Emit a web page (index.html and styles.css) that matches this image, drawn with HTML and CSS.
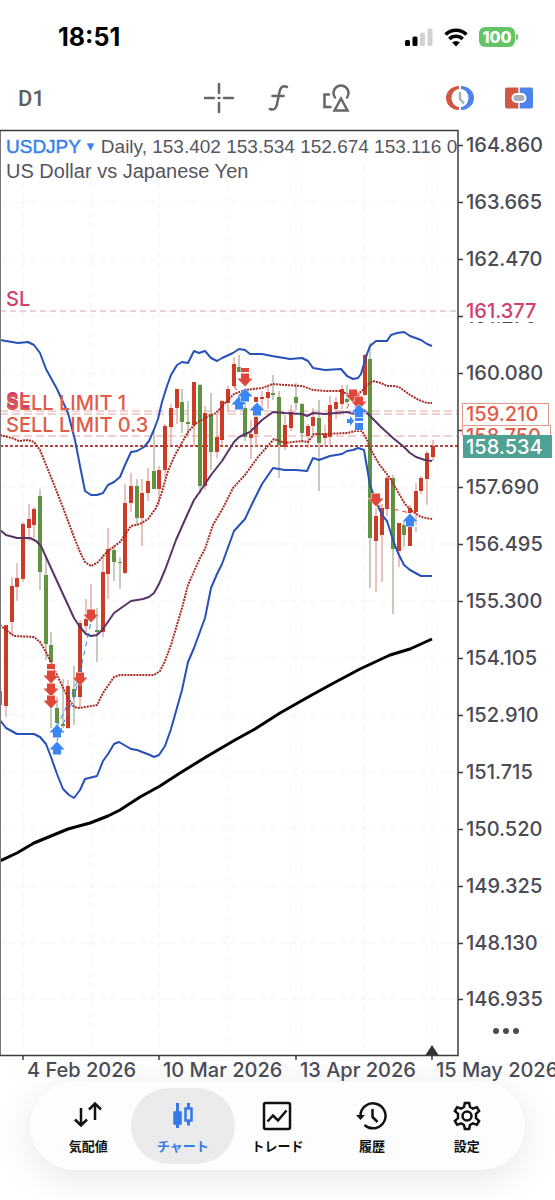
FILE: index.html
```html
<!DOCTYPE html>
<html lang="ja">

<head>
  <meta charset="UTF-8">
  <meta name="viewport" content="width=device-width">
  <title>USDJPY Daily</title>
  <link rel="stylesheet" href="styles.css">
</head>

<body>

  <header class="status-bar">
    <time class="clock">18:51</time>
    <div class="status-icons">
      <svg width="28" height="20" viewBox="0 0 28 20" aria-hidden="true">
        <rect x="0" y="13" width="5" height="6" rx="1.5" />
        <rect x="7.500" y="9.500" width="5" height="9.500" rx="1.500" />
        <rect x="15" y="5.500" width="5" height="13.500" rx="1.500" fill="#d2d2d2" />
        <rect x="22.500" y="1.500" width="5" height="17.500" rx="1.500" fill="#d2d2d2" />
      </svg>
      <svg width="24" height="20" viewBox="0 0 24 20" aria-hidden="true">
        <g fill="none" stroke="#000" stroke-width="3.500">
          <path d="M1.500 7.500a15 15 0 0 1 21 0" />
          <path d="M5.300 12a9.500 9.500 0 0 1 13.400 0" />
        </g>
        <path d="M12 19.500l-3.800-4a5.500 5.500 0 0 1 7.600 0z" />
      </svg>
      <span class="battery">100</span>
    </div>
  </header>

  <div class="toolbar">
    <button type="button" class="period">D1</button>
    <div class="tools">
      <button type="button" aria-label="Crosshair">
        <svg width="32" height="32" viewBox="0 0 32 32" class="line-icon">
          <path d="M16 2v9M16 21v9M2 16h9M21 16h9M15.500 16h1" />
        </svg>
      </button>
      <button type="button" aria-label="Indicators">
        <svg width="32" height="32" viewBox="0 0 32 32" class="line-icon">
          <path d="M25 5c-4-1.800-6.500 0-7.300 4l-2.900 14c-.9 4-3.300 5.400-7 4M10.500 14h11" />
        </svg>
      </button>
      <button type="button" aria-label="Objects">
        <svg width="32" height="32" viewBox="0 0 32 32" class="line-icon">
          <path d="M8 12.500H3.500v12.500h6M14 15.500a7.500 7.500 0 1 1 12 0" />
          <path d="M20 16.500l-6.500 12h13z" />
        </svg>
      </button>
    </div>
    <div class="trade-tools">
      <button type="button" aria-label="Pending orders">
        <svg width="32" height="32" viewBox="0 0 32 32">
          <path d="M15 4a13 12 0 0 0 0 24v-3a7.500 9 0 0 1 0-18z" fill="#cf5743" />
          <path d="M17 4a13 12 0 0 1 0 24v-3a7.500 9 0 0 0 0-18z" fill="#4d83ea" />
          <path d="M16 10v7l4 4.500" fill="none" stroke="#aab0b8" stroke-width="2.500" />
        </svg>
      </button>
      <button type="button" aria-label="One click trading">
        <svg width="32" height="32" viewBox="0 0 32 32">
          <path d="M4 5.500h11.300v21H4a2 2 0 0 1-2-2v-17a2 2 0 0 1 2-2z" fill="#cf5743" />
          <path d="M16.700 5.500H28a2 2 0 0 1 2 2v17a2 2 0 0 1-2 2H16.700z" fill="#4d83ea" />
          <rect x="9.500" y="12" width="13" height="8" rx="4" fill="#aab0b8" stroke="#fff" stroke-width="2" />
        </svg>
      </button>
    </div>
  </div>

  <main class="chart">
    <div class="chart-title">
      <p class="quote"><button type="button" class="symbol">USDJPY <span class="caret">▼</span></button> Daily, 153.402 153.534 152.674 153.116 0</p>
      <p class="description">US Dollar vs Japanese Yen</p>
    </div>

    <svg class="plot" viewBox="0 122 555 960" role="img" aria-label="USDJPY Daily">
      <defs>
        <path id="sell" d="M-4-6.500h8v5h3.500L0 6.500-7.500-1.500H-4z" />
        <path id="buy" d="M-4 6.500h8v-5h3.500L0-6.500-7.500 1.500H-4z" />
        <clipPath id="labels"><rect x="462" y="425" width="93" height="11" /></clipPath>
      </defs>

      <!-- grid -->
      <path class="grid" d="M0 202H458M0 259H458M0 316H458M0 373H458M0 430H458M0 487H458M0 544H458M0 601H458M0 658H458M0 715H458M0 772H458M0 829H458M0 886H458M0 943H458M0 999H458" />
      <path class="grid" d="M23 182V1055M91 182V1055M159 182V1055M227 155V1055M296 155V1055M364 155V1055M432 155V1055" />

      <!-- order levels -->
      <path class="level stop" d="M0 311H458" />
      <path class="level" d="M0 411H458M0 414H458M0 436H458" />
      <path class="bid" d="M0 446H458" />

      <!-- candles, down -->
      <path class="wick down" d="M40 489V590M46 558V660M51 632V728M57 697V725M63 679V728M74 666V725M97 608V662M114 545V581M120 557V589M137 479V526M154 430V489M182 389V433M188 401V437M200 384V494M211 393V470M239 355V372M245 406V441M273 375V400M279 391V478M296 383V410M302 403V443M319 400V491M347 385V404M370 343V588M393 475V614M404 521V547M416 527V532" />
      <path class="body down" d="M0 691V705M40 496V572M46 575V644M51 645V662M57 708V723M63 724V726M74 689V697M97 630V632M114 550V562M120 562V563M137 486V518M154 471V489M182 402V422M188 422V424M200 385V486M211 414V452M239 367V372M245 408V437M273 393V395M279 397V445M296 397V403M302 404V433M319 418V443M347 399V402M370 359V538M393 478V549M404 525V535" />

      <!-- candles, up -->
      <path class="wick up" d="M6 625V717M12 577V635M17 563V601M23 522V582M29 504V541M34 507V538M68 680V729M80 620V708M86 599V632M91 584V610M103 554V637M108 528V599M125 484V574M131 473V512M142 479V546M148 468V501M159 466V505M165 424V478M171 404V445M177 389V424M194 382V446M205 406V490M217 414V458M222 400V445M228 386V412M234 357V387M251 420V459M256 415V447M262 391V409M268 386V409M285 415V450M291 405V431M308 424V448M313 408V436M325 425V446M330 396V445M336 397V419M342 385V409M365 354V396M376 508V592M382 504V582M387 476V516M399 523V567M410 505V515M416 483V525M421 476V494M427 451V505M433 440V461" />
      <path class="body up" d="M6 625V706M12 586V622M17 578V587M23 524V579M29 519V528M34 509V525M68 686V728M80 623V697M86 619V626M103 572V632M108 549V574M125 503V573M131 486V503M142 493V518M148 481V493M159 470V489M165 426V470M171 408V427M177 389V408M194 382V425M205 413V486M217 437V452M222 401V440M228 389V403M234 364V386M251 434V438M256 417V434M256 397V402M262 397V399M268 392V398M285 425V447M291 412V428M308 426V436M313 417V426M325 434V438M330 405V437M336 402V409M342 389V404M365 355V395M376 516V541M382 508V535M387 478V509M399 523V551M410 508V513M410 527V546M416 491V512M421 478V491M427 453V479M433 446V457" />

      <!-- moving averages and bands -->
      <polyline class="slow" points="0,861 17,853 34,843 51,836 68,829 90,823 108,816 120,810 140,797 160,786 180,773 206,757 235,740 255,729 280,713 310,696 330,685 360,669 390,655 410,649 432,639" />
      <polyline class="band" points="0,340 6,341 18,343 28,342 34,345 40,353 46,369 57,389 68,413 75,440 80,466 85,491 91,495 97,495 103,493 108,485 114,482 120,477 125,465 131,452 137,451 144,447 149,441 153,432 158,419 162,402 167,386 171,375 177,365 182,362 188,363 194,351 199,353 205,351 211,358 217,361 222,358 233,353 239,349 245,350 250,354 262,354 272,356 290,359 302,358 308,361 313,368 325,370 341,369 347,376 353,379 358,378 361,374 364,364 367,354 370,346 376,341 387,341 391,335 397,333 404,332 410,336 421,340 427,344 432,346" />
      <polyline class="band" points="0,720 6,728 17,734 34,734 40,737 46,744 51,757 57,774 63,789 69,795 74,798 80,790 85,779 97,776 103,761 108,754 114,744 119,742 131,749 137,750 150,755 154,757 159,755 165,746 171,729 182,690 188,662 194,648 205,618 211,588 217,574 222,564 234,531 245,519 252,504 262,484 273,468 285,470 296,470 307,471 313,458 319,460 330,456 342,454 347,451 353,450 358,448 364,450 370,485 377,504 382,515 387,521 393,540 398,553 404,565 410,570 421,576 432,576" />
      <polyline class="middle" points="0,530 6,535 17,538 30,538 36,541 41,546 51,568 62,592 74,618 80,627 86,634 91,636 97,635 103,629 114,613 131,601 143,599 149,597 154,593 159,584 165,570 176,540 188,513 194,500 199,493 211,475 222,461 234,442 239,437 250,432 262,420 273,412 285,413 302,414 307,416 313,413 325,414 347,412 356,414 364,410 370,416 381,427 393,438 404,447 410,453 416,457 425,460 432,461" />
      <polyline class="deviation" points="0,435 12,438 19,441 28,440 34,442 40,450 51,477 62,505 74,537 80,552 85,562 91,566 97,563 108,551 120,542 131,526 140,524 148,519 156,508 161,495 168,471 175,455 188,432 195,424 205,418 216,413 225,403 234,394 245,390 262,388 273,384 285,385 302,386 313,390 325,391 341,391 347,394 353,397 362,391 367,385 373,381 381,383 387,386 393,386 399,387 410,395 421,401 427,403 432,403" />
      <polyline class="deviation" points="0,625 6,630 14,636 34,637 40,642 46,652 57,675 68,698 74,707 80,708 97,705 103,693 114,677 120,675 154,675 160,671 165,661 171,645 182,608 188,585 200,558 205,549 213,525 223,508 233,488 245,475 258,457 274,439 285,443 302,441 308,442 314,434 325,434 347,433 355,431 362,431 367,440 371,450 379,464 390,478 398,492 405,504 412,511 421,517 432,519" />

      <!-- deals -->
      <path class="link-buy" d="M57 741L64 722L75 695L91 622M57 727L68 703L80 675M245 388L252 396M51 685V712M353 397L359 424" />
      <path class="link-sell" d="M376 505L410 513M234 386L243 400M353 396L345 412" />
      <g class="deal-sell">
        <rect x="47" y="664" width="8" height="5" />
        <use href="#sell" x="51" y="677" />
        <use href="#sell" x="51" y="690" />
        <use href="#sell" x="51" y="702" />
        <use href="#sell" x="80" y="679" />
        <use href="#sell" x="91" y="616" />
        <use href="#sell" x="245" y="380" />
        <rect x="241" y="368" width="8" height="4" />
        <use href="#sell" x="353" y="396" />
        <use href="#sell" x="359" y="403" />
        <use href="#sell" x="376" y="500" />
      </g>
      <g class="deal-buy">
        <use href="#buy" x="57" y="731" />
        <use href="#buy" x="57" y="748" />
        <use href="#buy" x="239" y="403" />
        <use href="#buy" x="245" y="395" />
        <use href="#buy" x="257" y="409" />
        <use href="#buy" x="359" y="411" />
        <rect x="355" y="418" width="8" height="3" />
        <rect x="355" y="423" width="8" height="7" />
        <path d="M347 419h3v-3l4 5-4 5v-3h-3z" />
        <use href="#buy" x="410" y="520" />
      </g>

      <!-- order labels -->
      <g class="order-labels">
        <text x="6" y="306" class="pink">SL</text>
        <text x="6" y="407" class="pink">SL</text>
        <text x="6" y="409" class="pink">SL</text>
        <text x="6" y="410">SELL LIMIT 1</text>
        <text x="6" y="432">SELL LIMIT 0.3</text>
      </g>

      <!-- frame and ticks -->
      <path class="frame-left" d="M0.500 130V1056" />
      <path class="frame" d="M0 130.500H458V1055.500H0" />
      <path class="frame" d="M458 145.500h5M458 202.500h5M458 259.500h5M458 316.500h5M458 373.500h5M458 430.500h5M458 487.500h5M458 544.500h5M458 601.500h5M458 658.500h5M458 715.500h5M458 772.500h5M458 829.500h5M458 886.500h5M458 943.500h5M458 999.500h5M23 1055v5M159 1055v5M296 1055v5M432 1055v5" />
      <path d="M425.500 1055l6.500-10 6.500 10z" fill="#333" />

      <!-- price scale -->
      <g class="scale">
        <text x="466" y="152">164.860</text>
        <text x="466" y="209">163.665</text>
        <text x="466" y="266">162.470</text>
        <text x="466" y="323">161.275</text>
        <text x="466" y="380">160.080</text>
        <text x="466" y="494">157.690</text>
        <text x="466" y="551">156.495</text>
        <text x="466" y="608">155.300</text>
        <text x="466" y="665">154.105</text>
        <text x="466" y="722">152.910</text>
        <text x="466" y="779">151.715</text>
        <text x="466" y="836">150.520</text>
        <text x="466" y="893">149.325</text>
        <text x="466" y="950">148.130</text>
        <text x="466" y="1006">146.935</text>
      </g>
      <rect x="464" y="300" width="91" height="22" fill="#fff" />
      <text x="466" y="318" class="price pink">161.377</text>
      <rect x="462.500" y="403.500" width="86" height="22" class="order-box" />
      <text x="466" y="421" class="price red">159.210</text>
      <g clip-path="url(#labels)">
        <rect x="462.500" y="425.500" width="88" height="22" class="order-box" />
        <text x="466" y="443" class="price red">158.750</text>
      </g>
      <rect x="463" y="435" width="89" height="23" fill="#4fa293" />
      <text x="466" y="454" class="price white">158.534</text>

      <!-- dates -->
      <g class="scale">
        <text x="27" y="1077">4 Feb 2026</text>
        <text x="163" y="1077">10 Mar 2026</text>
        <text x="300" y="1077">13 Apr 2026</text>
        <text x="436" y="1077">15 May 2026</text>
      </g>
    </svg>

    <button type="button" class="more" aria-label="More">
      <svg width="28" height="8" viewBox="0 0 28 8" fill="#4a4b55">
        <circle cx="4" cy="4" r="3" />
        <circle cx="14" cy="4" r="3" />
        <circle cx="24" cy="4" r="3" />
      </svg>
    </button>
  </main>

  <nav class="tab-bar">
    <a href="#quotes">
      <svg width="32" height="32" viewBox="0 0 32 32" class="tab-icon">
        <path d="M9 8v17M3 19.500L9 25.500l6-6M23 20V3.500M17 9.500l6-6 6 6" />
      </svg>
      気配値
    </a>
    <a href="#chart" class="active" aria-current="page">
      <svg width="32" height="32" viewBox="0 0 32 32" class="tab-icon">
        <path d="M10.500 3v25M21.500 3v5M21.500 20.500v5" stroke-width="3" />
        <rect x="7.500" y="12.500" width="6" height="11" fill="currentColor" />
        <rect x="18.500" y="8.500" width="6" height="12" />
      </svg>
      チャート
    </a>
    <a href="#trade">
      <svg width="32" height="32" viewBox="0 0 32 32" class="tab-icon">
        <rect x="3" y="3" width="26" height="26" rx="1.500" />
        <path d="M6.500 21.500l5.500-6 5 5 8.500-10" />
      </svg>
      トレード
    </a>
    <a href="#history">
      <svg width="32" height="32" viewBox="0 0 32 32" class="tab-icon">
        <path d="M4.500 16A12.500 12.500 0 1 1 8.500 25M16.500 9v8l5 5" />
        <path d="M0 15h9l-4.500 5z" fill="currentColor" stroke="none" />
      </svg>
      履歴
    </a>
    <a href="#settings">
      <svg width="32" height="32" viewBox="0 0 32 32" class="tab-icon">
        <path d="M13.800 3h4.400l.8 4 2.900 1.700 4-1.500 2.200 3.900-3.100 2.700v4.400l3.100 2.700-2.200 3.900-4-1.500L19 25l-.8 4h-4.400l-.8-4-2.900-1.700-4 1.500-2.200-3.900L7 18.200v-4.400l-3.100-2.700 2.200-3.900 4 1.500L13 7z" />
        <circle cx="16" cy="16" r="4.500" />
      </svg>
      設定
    </a>
  </nav>

</body>

</html>
```
FILE: styles.css
```css
* {
  box-sizing: border-box;
  margin: 0;
  padding: 0;
}

body {
  font-family: Inter, "Noto Sans CJK JP", sans-serif;
  background-color: #fff;
  color: #4a4b55;
  min-height: 100vh;
  overflow-x: hidden;
}

button {
  background: none;
  border: none;
  color: inherit;
  font: inherit;
  cursor: pointer;
}

svg {
  display: block;
}

/* status bar */
.status-bar {
  display: flex;
  align-items: center;
  justify-content: space-between;
  height: 74px;
  padding: 0 40px 0 58px;
  color: #000;
}

.clock {
  font-size: 25px;
  font-weight: 700;
}

.status-icons {
  display: flex;
  align-items: center;
  gap: 11px;
}

.battery {
  position: relative;
  width: 36px;
  border-radius: 6px;
  background-color: #65c466;
  color: #fff;
  font-size: 16px;
  font-weight: 800;
  line-height: 20px;
  text-align: center;
}

.battery::after {
  content: "";
  position: absolute;
  top: 7px;
  right: -3px;
  width: 2px;
  height: 6px;
  border-radius: 0 2px 2px 0;
  background-color: #65c466;
}

/* toolbar */
.toolbar {
  display: grid;
  grid-template-columns: 1fr auto 1fr;
  align-items: center;
  height: 48px;
  padding: 0 14px;
}

.period {
  justify-self: start;
  padding-left: 4px;
  font-family: Roboto, sans-serif;
  font-size: 22px;
  font-weight: 500;
  color: #5f5f5f;
}

.tools,
.trade-tools {
  display: flex;
  gap: 15px;
}

.trade-tools {
  justify-self: end;
}

.tools button,
.trade-tools button {
  display: flex;
  align-items: center;
  justify-content: center;
  width: 44px;
  height: 44px;
}

.line-icon {
  fill: none;
  stroke: #666;
  stroke-width: 2.5;
  stroke-linecap: round;
}

/* chart */
.chart {
  position: relative;
}

.plot {
  width: 100%;
  height: auto;
  font-size: 20px;
  font-weight: 500;
}

.chart-title {
  position: absolute;
  top: 12px;
  left: 6px;
  white-space: nowrap;
  font-family: "Liberation Sans", Arial, sans-serif;
  line-height: 25px;
  color: #55565f;
}

.quote {
  display: flex;
  gap: 5px;
  height: 25px;
  font-size: 19px;
}

.description {
  font-size: 20px;
}

.symbol {
  display: flex;
  align-items: center;
  gap: 4px;
  color: #3b82ee;
  -webkit-text-stroke: 0.5px #3b82ee;
}

.caret {
  font-size: 11px;
}

.grid,
.level,
.bid,
.frame,
.frame-left,
.band,
.middle,
.deviation,
.slow,
.link-buy,
.link-sell {
  fill: none;
}

.grid {
  stroke: #f1f3f6;
  stroke-dasharray: 6 4;
}

.level {
  stroke: #e5a3a3;
  stroke-dasharray: 8 4;
}

.stop {
  stroke: #d9a0b5;
  stroke-dasharray: 6 4;
}

.bid {
  stroke: #b5443f;
  stroke-width: 2;
  stroke-dasharray: 3 2;
}

.wick.down {
  stroke: #8a9a80;
}

.wick.up {
  stroke: #d9857c;
}

.body {
  stroke-width: 4;
}

.body.down {
  stroke: #5f933f;
}

.body.up {
  stroke: #cc3b26;
}

.band {
  stroke: #2750b8;
  stroke-width: 2;
  stroke-linejoin: round;
}

.middle {
  stroke: #5a3468;
  stroke-width: 2;
  stroke-linejoin: round;
}

.deviation {
  stroke: #a82a22;
  stroke-width: 2;
  stroke-dasharray: 2 1;
}

.slow {
  stroke: #000;
  stroke-width: 3;
  stroke-linejoin: round;
}

.link-buy {
  stroke: #3b82ee;
  stroke-dasharray: 5 4;
}

.link-sell {
  stroke: #d9483c;
  stroke-dasharray: 5 4;
}

.deal-sell {
  fill: #e0473a;
  stroke: #fff;
  paint-order: stroke;
}

.deal-buy {
  fill: #3a86f5;
  stroke: #fff;
  paint-order: stroke;
}

.frame {
  stroke: #3c3c42;
  stroke-width: 1.5;
}

.frame-left {
  stroke: #77777b;
}

.scale {
  fill: #4a4b55;
}

.order-labels,
.red {
  fill: #df5c48;
}

.pink {
  fill: #d0406f;
}

.white {
  fill: #fff;
}

.order-box {
  fill: #fff;
  stroke: #e0998c;
}

.more {
  position: absolute;
  right: 35px;
  bottom: 47px;
}

/* bottom tabs */
.tab-bar {
  display: flex;
  margin: 0 30px;
  padding: 6px 11px;
  border-radius: 44px;
  background-color: #fdfdfd;
  box-shadow: 0 8px 40px rgba(0, 0, 0, 0.1);
}

.tab-bar a {
  display: flex;
  flex: 1;
  flex-direction: column;
  align-items: center;
  gap: 4px;
  height: 76px;
  margin: 0 -5px;
  padding-top: 12px;
  border-radius: 38px;
  color: #111;
  font-size: 13px;
  font-weight: 700;
  line-height: 20px;
  text-decoration: none;
}

.tab-bar .active {
  background-color: #ebebeb;
  color: #3579e8;
}

.tab-icon {
  fill: none;
  stroke: currentColor;
  stroke-width: 2.5;
}
```
